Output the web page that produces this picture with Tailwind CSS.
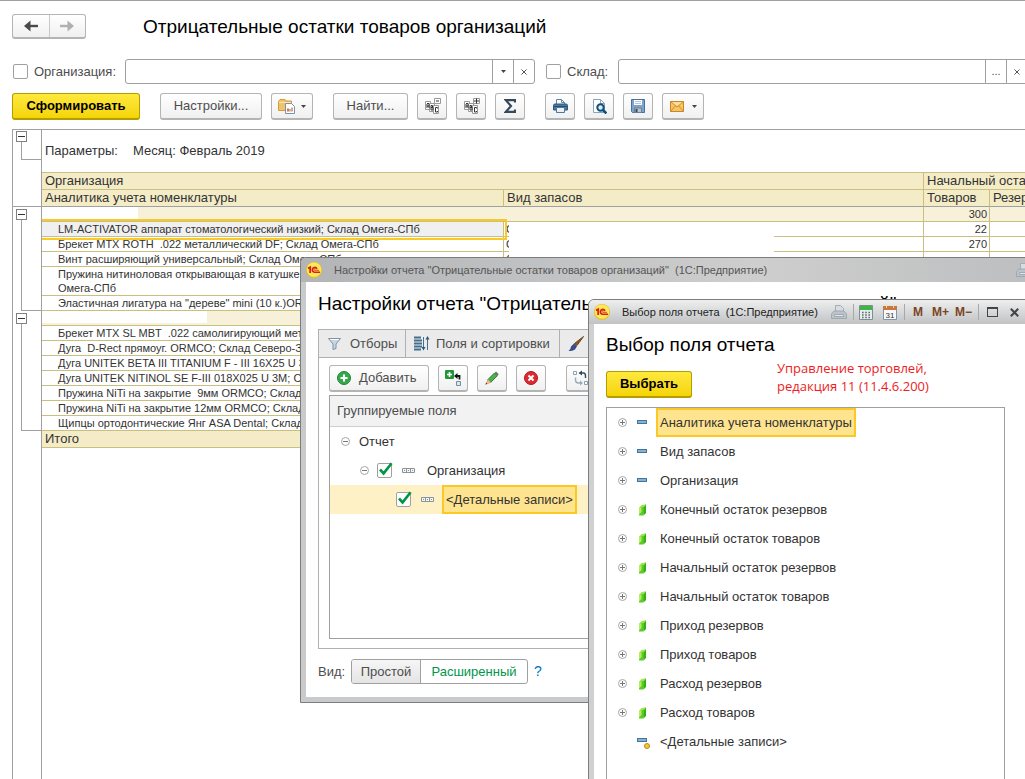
<!DOCTYPE html>
<html lang="ru">
<head>
    <meta charset="UTF-8">
    <meta name="viewport" content="width=device-width, initial-scale=1.0">
    <title>Отрицательные остатки товаров организаций</title>
    <script src="https://cdn.jsdelivr.net/npm/@tailwindcss/browser@4"></script>
</head>
<body class="relative flex h-screen flex-col overflow-hidden border-t border-[#a0a0a0] bg-white pl-3 font-['Liberation_Sans',Arial,sans-serif] text-[13px] text-[#4d4d4d]">

    <!-- Shared icons -->
    <svg class="hidden">
        <symbol id="logo" viewBox="0 0 16 16">
            <circle cx="8" cy="8" r="8" fill="#e3c32e"/>
            <circle cx="8" cy="7.6" r="7.2" fill="#ffe95a"/>
            <path d="M2 6.4 4.200 5.200V11" fill="none" stroke="#d8201a" stroke-width="1.800"/>
            <path d="M11 6.800A2.400 2.400 0 1 0 8.700 10.200H14" fill="none" stroke="#d8201a" stroke-width="1.600"/>
            <path d="M9.800 7.200a.9.9 0 1 0-1 1.100H13" fill="none" stroke="#d8201a" stroke-width=".8"/>
        </symbol>
        <symbol id="plus" viewBox="0 0 9 9">
            <circle cx="4.5" cy="4.5" r="4" fill="#fff" stroke="#a6a6a6"/>
            <path d="M2 4.5h5M4.5 2v5" stroke="#777"/>
        </symbol>
        <symbol id="minus" viewBox="0 0 9 9">
            <circle cx="4.5" cy="4.5" r="4" fill="#fff" stroke="#a6a6a6"/>
            <path d="M2 4.5h5" stroke="#777"/>
        </symbol>
        <symbol id="dim" viewBox="0 0 14 14">
            <rect x="0.5" y="4.5" width="9" height="3" fill="#7fb4dc" stroke="#4a7291"/>
        </symbol>
        <symbol id="measure" viewBox="0 0 14 14">
            <path d="M5 2.500 9 1.500V10L6.500 12.500z" fill="#36b012"/>
            <path d="M2 5 4.500 2 9 1.500 7 4z" fill="#9be650"/>
            <path d="M2 5 4 4h3L6.500 12.500H2z" fill="#58cc28"/>
            <path d="M2 5 4.500 4v5L2 11.500z" fill="#b8ec58"/>
        </symbol>
        <symbol id="tick" viewBox="0 0 17 17">
            <path d="M3 8.5 6.6 12.4 14.6 2.2" fill="none" stroke="#009646" stroke-width="2.6"/>
        </symbol>
        <symbol id="group" viewBox="0 0 13 5">
            <path d="M.5.5h12v4H.5zM4.5.5v4M8.5.5v4M2 2.5h1M6 2.5h1M10 2.5h1" fill="#f4f5f6" stroke="#8b949b"/>
        </symbol>
        <symbol id="printer-off" viewBox="0 0 16 14">
            <path d="M4.5 6V.5h5l3 3V6" fill="#d9dde0" stroke="#a4adb5"/>
            <path d="M3 6h10l2.5 3v4.5H.5V9z" fill="#bcc3c9" stroke="#a0a9b1"/>
            <path d="M3.5 9.5h9v2h-9z" fill="#e4e7e9" stroke="#a0a9b1"/>
        </symbol>
        <symbol id="down" viewBox="0 0 5 3"><path d="M0 0h5L2.5 3z" fill="#444"/></symbol>
        <symbol id="cross" viewBox="0 0 6 6"><path d="M.5.5l5 5M5.5.5l-5 5" stroke="#555"/></symbol>
    </svg>

    <!-- Header -->
    <header class="flex items-center gap-[57px] pt-3">
        <div class="flex h-[25px] w-[74px] rounded-[3px] border border-b-2 border-[#b4b4b4] bg-linear-to-b from-white to-[#f0f0f0]">
            <button type="button" aria-label="Назад" class="flex flex-1 items-center justify-center border-r border-[#c8c8c8]">
                <svg class="h-3 w-[14px]" viewBox="0 0 14 12"><path d="M3 6h11" stroke="#4a4a4a" stroke-width="2.4"/><path d="M6.5.5V11.500L0 6z" fill="#4a4a4a"/></svg>
            </button>
            <button type="button" aria-label="Вперед" class="flex flex-1 items-center justify-center">
                <svg class="h-3 w-[14px]" viewBox="0 0 14 12"><path d="M0 6h11" stroke="#b0b0b0" stroke-width="2.400"/><path d="M7.500.5V11.500L14 6z" fill="#b0b0b0"/></svg>
            </button>
        </div>
        <h1 class="text-[19px] leading-[27px] text-black">Отрицательные остатки товаров организаций</h1>
    </header>

    <!-- Filters -->
    <div class="-mr-[3px] mt-[19px] flex items-center">
        <input type="checkbox" id="useOrg" class="ml-px size-[15px] shrink-0 appearance-none rounded-[2px] border border-[#a0a0a0]">
        <label for="useOrg" class="ml-[6px] w-[91px] shrink-0">Организация:</label>
        <div class="flex h-[25px] min-w-0 flex-1 rounded-[3px] border border-[#a0a0a0]">
            <input type="text" aria-label="Организация" class="min-w-0 flex-1 px-2 outline-none">
            <button type="button" aria-label="Выбрать из списка" class="flex w-[21px] items-center justify-center border-l border-[#a0a0a0]"><svg class="h-[3px] w-[5px]"><use href="#down"/></svg></button>
            <button type="button" aria-label="Очистить" class="flex w-[21px] items-center justify-center border-l border-[#a0a0a0]"><svg class="size-[6px]"><use href="#cross"/></svg></button>
        </div>
        <input type="checkbox" id="useStore" class="ml-[11px] size-[15px] shrink-0 appearance-none rounded-[2px] border border-[#a0a0a0]">
        <label for="useStore" class="ml-[6px] w-[51px] shrink-0">Склад:</label>
        <div class="flex h-[25px] min-w-0 flex-1 rounded-[3px] border border-[#a0a0a0]">
            <input type="text" aria-label="Склад" class="min-w-0 flex-1 px-2 outline-none">
            <button type="button" aria-label="Выбрать" class="w-[21px] border-l border-[#a0a0a0] text-[11px]">...</button>
            <button type="button" aria-label="Очистить" class="flex w-[21px] items-center justify-center border-l border-[#a0a0a0]"><svg class="size-[6px]"><use href="#cross"/></svg></button>
        </div>
    </div>

    <!-- Toolbar -->
    <div class="mt-[9px] flex gap-[9px]">
        <button type="button" class="mr-[11px] h-[27px] w-32 rounded-[3px] border border-b-2 border-[#b39d00] bg-linear-to-b from-[#ffe93b] to-[#f5d400] font-bold text-black">Сформировать</button>
        <button type="button" class="h-[27px] w-[102px] rounded-[3px] border border-b-2 border-[#b4b4b4] bg-linear-to-b from-white to-[#f0f0f0]">Настройки...</button>
        <button type="button" aria-label="Варианты отчета" class="mr-[11px] flex h-[27px] w-[42px] items-center justify-center gap-[6px] rounded-[3px] border border-b-2 border-[#b4b4b4] bg-linear-to-b from-white to-[#f0f0f0]">
            <svg class="h-4 w-[17px]" viewBox="0 0 17 16">
                <path d="M.5 12.500V3.500L2 1.500h5l1 1.500h5.500v9.500z" fill="#f0c36c" stroke="#d29a3a"/>
                <path d="M1 4.500h12" stroke="#fde6b0"/>
                <path d="M7.500 5.500h6l3 3v7h-9z" fill="#fff" stroke="#7b93a8"/>
                <path d="M10 13.500v-3" stroke="#d33" stroke-width="1.500"/><path d="M12 13.500V11" stroke="#3a9a3a"/><path d="M14 13.500V9.500" stroke="#d33"/>
            </svg>
            <svg class="h-[3px] w-[5px]"><use href="#down"/></svg>
        </button>
        <button type="button" class="h-[27px] w-[75px] rounded-[3px] border border-b-2 border-[#b4b4b4] bg-linear-to-b from-white to-[#f0f0f0]">Найти...</button>
        <button type="button" aria-label="Свернуть группы" class="flex h-[27px] w-[30px] items-center justify-center rounded-[3px] border border-b-2 border-[#b4b4b4] bg-linear-to-b from-white to-[#f0f0f0]">
            <svg class="h-4 w-[17px]" viewBox="0 0 17 16">
                <path d="M1.500 3.500h5v8h-5z" fill="#fff" stroke="#999"/><path d="M5.500 5.500h5v8h-5z" fill="#fff" stroke="#999"/><path d="M9.500 7.500h5v8h-5zM10.500.5h6v5h-6z" fill="#fff" stroke="#999"/>
                <path d="M3 10V6l1-1 1 1v4M3 8h2M7 12V7.500h1.500v2H7h2V12zM13.500 10.500v-1h-2v4.500h2v-1M12 3h3" fill="none" stroke="#333"/>
            </svg>
        </button>
        <button type="button" aria-label="Развернуть группы" class="flex h-[27px] w-[30px] items-center justify-center rounded-[3px] border border-b-2 border-[#b4b4b4] bg-linear-to-b from-white to-[#f0f0f0]">
            <svg class="h-4 w-[17px]" viewBox="0 0 17 16">
                <path d="M1.500 3.500h5v8h-5z" fill="#fff" stroke="#999"/><path d="M5.500 5.500h5v8h-5z" fill="#fff" stroke="#999"/><path d="M9.500 7.500h5v8h-5zM10.500.5h6v5h-6z" fill="#fff" stroke="#999"/>
                <path d="M3 10V6l1-1 1 1v4M3 8h2M7 12V7.500h1.500v2H7h2V12zM13.500 10.500v-1h-2v4.500h2v-1M11 3h5M13.500.5v5" fill="none" stroke="#333"/>
            </svg>
        </button>
        <button type="button" aria-label="Сумма" class="mr-[11px] flex h-[27px] w-[30px] items-center justify-center rounded-[3px] border border-b-2 border-[#b4b4b4] bg-linear-to-b from-white to-[#f0f0f0]">
            <svg class="h-[14px] w-3" viewBox="0 0 12 14"><path d="M11 3.500V1.200H1.800L7 7l-5.200 5.800H11v-2.300" fill="none" stroke="#34495a" stroke-width="2.200"/></svg>
        </button>
        <button type="button" aria-label="Печать" class="flex h-[27px] w-[30px] items-center justify-center rounded-[3px] border border-b-2 border-[#b4b4b4] bg-linear-to-b from-white to-[#f0f0f0]">
            <svg class="h-[14px] w-[15px]" viewBox="0 0 15 14">
                <path d="M3.500 6V.5h5l3 3V6" fill="#fff" stroke="#5f86a8"/><path d="M8.500.5v3h3" fill="none" stroke="#5f86a8"/>
                <path d="M.5 6.500Q.5 5 2 5h11q1.500 0 1.500 1.500V11H.5z" fill="#4c789d" stroke="#2f587c"/><path d="M1 7.500h13" stroke="#274d70"/>
                <path d="M3.500 8.500h8v5h-8z" fill="#e9f0f6" stroke="#4c789d"/>
            </svg>
        </button>
        <button type="button" aria-label="Просмотр" class="flex h-[27px] w-[30px] items-center justify-center rounded-[3px] border border-b-2 border-[#b4b4b4] bg-linear-to-b from-white to-[#f0f0f0]">
            <svg class="h-[15px] w-[15px]" viewBox="0 0 15 15">
                <path d="M1.500 13.500V.5h7l4 4v9z" fill="#fff" stroke="#8ea4b6"/><path d="M8.500.5v4h4" fill="none" stroke="#8ea4b6"/>
                <circle cx="8.500" cy="8.500" r="3.200" fill="#dcebf5" stroke="#0f4f7d" stroke-width="2"/><path d="M11 11l3.400 3.400" stroke="#0f4f7d" stroke-width="2.600"/>
            </svg>
        </button>
        <button type="button" aria-label="Сохранить" class="flex h-[27px] w-[30px] items-center justify-center rounded-[3px] border border-b-2 border-[#b4b4b4] bg-linear-to-b from-white to-[#f0f0f0]">
            <svg class="size-[14px]" viewBox="0 0 14 14">
                <path d="M.5.5h13v13h-12l-1-1z" fill="#7ba3d0" stroke="#496f9f"/>
                <path d="M3 1h8v5H3z" fill="#fff"/><path d="M4 2.500h6M4 4.500h6" stroke="#b4c4d4"/>
                <path d="M3.500 9h7v4.500h-7z" fill="#b9c4cd" stroke="#6d7f90"/><path d="M5.500 10v3" stroke="#33475b" stroke-width="2"/>
            </svg>
        </button>
        <button type="button" aria-label="Отправить" class="flex h-[27px] w-[42px] items-center justify-center gap-2 rounded-[3px] border border-b-2 border-[#b4b4b4] bg-linear-to-b from-white to-[#f0f0f0]">
            <svg class="h-[11px] w-[14px]" viewBox="0 0 14 11"><path d="M.5.5h13v10H.5z" fill="#f7c566" stroke="#c8882a"/><path d="M.5.5 7 6l6.500-5.500M.5 10.500 5.200 5M13.500 10.500 8.800 5" fill="none" stroke="#cf8f30"/><path d="M2 1.300h10L7 5z" fill="#fde0a0"/></svg>
            <svg class="h-[3px] w-[5px]"><use href="#down"/></svg>
        </button>
    </div>

    <!-- Report -->
    <main class="mt-[9px] flex min-h-0 flex-1 flex-col overflow-hidden border-t border-l border-[#a0a0a0] text-[#333]">
        <table class="w-[1100px] min-w-full table-fixed border-separate border-spacing-0 text-left text-[11px] leading-[14px] [&_td]:p-0 [&_th]:p-0 [&_th]:font-normal">
            <colgroup>
                <col class="w-[29px]"><col class="w-[462px]"><col class="w-[420px]"><col class="w-[66px]"><col>
            </colgroup>
            <thead class="text-[13px] leading-4">
                <tr>
                    <td rowspan="3" class="border-r border-b border-[#a0a0a0] align-top">
                        <div class="flex h-[30px] flex-col pt-px pl-[3px]">
                            <button type="button" aria-label="Свернуть" class="flex size-[11px] items-center justify-center border border-[#808080]"><span class="h-px w-[7px] bg-[#333]"></span></button>
                            <span class="ml-[5px] flex-1 border-b border-l border-[#a0a0a0]"></span>
                        </div>
                    </td>
                    <td colspan="4" class="h-[43px] border-b border-[#c9bf80]"><span class="inline-block w-[91px] pl-[3px]">Параметры:</span>Месяц: Февраль 2019</td>
                </tr>
                <tr class="bg-[#f3ecc7]">
                    <th colspan="2" class="h-[17px] border-r border-b border-[#c9bf80]"><span class="pl-[3px]">Организация</span></th>
                    <th colspan="2" class="border-b border-[#c9bf80] whitespace-nowrap"><span class="pl-[3px]">Начальный остаток</span></th>
                </tr>
                <tr class="bg-[#f3ecc7]">
                    <th class="h-[17px] border-r border-b border-r-[#c9bf80] border-b-[#a0a0a0]"><span class="pl-[3px]">Аналитика учета номенклатуры</span></th>
                    <th class="border-r border-b border-r-[#c9bf80] border-b-[#a0a0a0]"><span class="pl-[3px]">Вид запасов</span></th>
                    <th class="border-r border-b border-r-[#c9bf80] border-b-[#a0a0a0]"><span class="pl-[3px]">Товаров</span></th>
                    <th class="border-b border-[#a0a0a0]"><span class="pl-[3px]">Резервов</span></th>
                </tr>
            </thead>
            <tbody class="[&_td]:border-[#c9bf80]">
                <tr class="bg-[#f8f1da]">
                    <td rowspan="6" class="h-px border-r border-[#a0a0a0]! bg-white align-top">
                        <div class="flex h-[104px] flex-col pt-[2px] pl-[3px]">
                            <button type="button" aria-label="Свернуть" class="flex size-[11px] items-center justify-center border border-[#808080]"><span class="h-px w-[7px] bg-[#333]"></span></button>
                            <span class="ml-[5px] flex-1 border-b border-l border-[#a0a0a0]"></span>
                        </div>
                    </td>
                    <td colspan="2" class="h-[15px] border-r border-b"><div class="h-[14px] w-24 bg-white"></div></td>
                    <td class="border-r border-b pr-[2px]! text-right">300</td>
                    <td class="border-b"></td>
                </tr>
                <tr>
                    <td class="relative h-[15px] border-r border-b bg-[#f0f0f0] pl-4!">LM-ACTIVATOR аппарат стоматологический низкий; Склад Омега-СПб
                        <span class="absolute -top-[3px] -right-1 -bottom-1 left-0 border-2 border-l-0 border-[#fbc926]"></span></td>
                    <td class="border-r border-b"><div class="flex h-[14px] overflow-hidden"><span class="w-[5px] overflow-hidden pl-[2px]">О</span><span class="-mb-px w-[265px] bg-white"></span></div></td>
                    <td class="border-r border-b pr-[2px]! text-right">22</td>
                    <td class="border-b"></td>
                </tr>
                <tr>
                    <td class="h-[15px] border-r border-b pl-4! whitespace-pre">Брекет MTX ROTH  .022 металлический DF; Склад Омега-СПб</td>
                    <td class="border-r border-b"><div class="relative z-10 -mt-px -mb-px flex h-4"><span class="w-[5px] overflow-hidden pt-px pl-[2px]">О</span><span class="w-[265px] bg-white"></span></div></td>
                    <td class="border-r border-b pr-[2px]! text-right">270</td>
                    <td class="border-b"></td>
                </tr>
                <tr>
                    <td class="h-[15px] border-r border-b pl-4!">Винт расширяющий универсальный; Склад Омега-СПб</td>
                    <td class="border-r border-b"><div class="flex h-[14px]"><span class="w-[5px] overflow-hidden pl-[2px]">1</span><span class="w-[265px] bg-white"></span></div></td>
                    <td class="border-r border-b"></td>
                    <td class="border-b"></td>
                </tr>
                <tr>
                    <td class="h-[29px] border-r border-b pl-4!">Пружина нитиноловая открывающая в катушке<br>Омега-СПб</td>
                    <td class="border-r border-b"></td>
                    <td class="border-r border-b"></td>
                    <td class="border-b"></td>
                </tr>
                <tr>
                    <td class="h-[15px] border-r border-b pl-4!">Эластичная лигатура на "дереве" mini (10 к.)ORMCO; Склад Омега-СПб</td>
                    <td class="border-r border-b"></td>
                    <td class="border-r border-b"></td>
                    <td class="border-b"></td>
                </tr>
                <tr class="bg-[#f8f1da]">
                    <td rowspan="8" class="border-r border-[#a0a0a0]! bg-white align-top">
                        <div class="flex h-[120px] flex-col pt-[2px] pl-[3px]">
                            <button type="button" aria-label="Свернуть" class="flex size-[11px] items-center justify-center border border-[#808080]"><span class="h-px w-[7px] bg-[#333]"></span></button>
                            <span class="ml-[5px] flex-1 border-b border-l border-[#a0a0a0]"></span>
                        </div>
                    </td>
                    <td colspan="2" class="h-[15px] border-r border-b align-top"><div class="h-3 w-[165px] bg-white"></div></td>
                    <td class="border-r border-b"></td>
                    <td class="border-b"></td>
                </tr>
                <tr>
                    <td colspan="4" class="h-[15px] border-b pl-4! whitespace-pre">Брекет MTX SL MBT  .022 самолигирующий металлический</td>
                </tr>
                <tr>
                    <td colspan="4" class="h-[15px] border-b pl-4! whitespace-pre">Дуга  D-Rect прямоуг. ORMCO; Склад Северо-Запад</td>
                </tr>
                <tr>
                    <td colspan="4" class="h-[15px] border-b pl-4!">Дуга UNITEK BETA III TITANIUM F - III 16X25 U 3M; Склад</td>
                </tr>
                <tr>
                    <td colspan="4" class="h-[15px] border-b pl-4!">Дуга UNITEK NITINOL SE F-III 018X025 U 3M; Склад</td>
                </tr>
                <tr>
                    <td colspan="4" class="h-[15px] border-b pl-4! whitespace-pre">Пружина NiTi на закрытие  9мм ORMCO; Склад Омега-СПб</td>
                </tr>
                <tr>
                    <td colspan="4" class="h-[15px] border-b pl-4!">Пружина NiTi на закрытие 12мм ORMCO; Склад Омега-СПб</td>
                </tr>
                <tr>
                    <td colspan="4" class="h-[15px] border-b pl-4!">Щипцы ортодонтические Янг ASA Dental; Склад Омега-СПб</td>
                </tr>
            </tbody>
            <tfoot class="text-[13px] leading-4">
                <tr>
                    <td class="border-r border-[#a0a0a0]"></td>
                    <td colspan="4" class="h-[17px] border-b border-[#c9bf80] bg-[#f3ecc7] pl-[3px]!">Итого</td>
                </tr>
            </tfoot>
        </table>
        <div class="ml-7 flex-1 border-l border-[#a0a0a0]"></div>
    </main>

    <!-- Report settings window -->
    <section class="absolute top-[256px] left-[300px] -right-[191px] z-20 flex h-[446px] flex-col rounded-t-[6px] border border-[#7d7d7d] bg-[#c9cacb]">
        <div class="flex h-6 items-center rounded-t-[5px] bg-linear-to-r from-[#b2b4b6] via-[#cecece] to-[#b2b4b6] pr-3 pl-[5px] text-[11px]">
            <svg class="size-4"><use href="#logo"/></svg>
            <h2 class="ml-3 flex-1 whitespace-pre text-[#555]">Настройки отчета "Отрицательные остатки товаров организаций"  (1С:Предприятие)</h2>
            <svg class="mr-[171px] h-[14px] w-4"><use href="#printer-off"/></svg>
        </div>
        <div class="mx-[5px] mb-[5px] flex flex-1 flex-col bg-white px-3">
            <h3 class="mt-2 text-[19px] leading-7 text-black">Настройки отчета "Отрицательные остатки товаров организаций"</h3>
            <div class="mt-[11px] flex h-[320px] flex-col border border-[#b0b0b0]">
                <div class="flex h-7 shrink-0 border-b border-[#b0b0b0] bg-[#ebebeb]" role="tablist">
                    <button type="button" role="tab" class="flex w-[87px] items-center gap-[9px] border-r border-[#b0b0b0] pl-[9px]">
                        <svg class="size-[13px]" viewBox="0 0 13 13"><path d="M.5 1.500h12L8 7v4.500l-3 1V7z" fill="#c9d6df" stroke="#7d93a5"/><path d="M2 2.500h9" stroke="#fff"/></svg>
                        Отборы</button>
                    <button type="button" role="tab" class="flex w-[154px] items-center gap-[6px] border-r border-[#b0b0b0] pl-2">
                        <svg class="h-[15px] w-4" viewBox="0 0 16 15"><path d="M0 1.500h7M0 4.500h8M0 7.500h8M0 10.500h8M0 13.500h7" stroke="#44708f" stroke-width="1.800"/><path d="M9.500 1v10M13.500 3v11" stroke="#44708f"/><path d="M7.500 11h4l-2 3.500zM11.500 3.500h4L13.500 0z" fill="#2a5878"/></svg>
                        Поля и сортировки</button>
                    <button type="button" role="tab" class="flex items-center gap-2 pl-2">
                        <svg class="size-4" viewBox="0 0 16 16"><path d="M15.500.5 9 9.500 6.500 7.500z" fill="#8a5a2a" stroke="#6b431c"/><path d="M6 7.500l3 2.700L7 13.500Q3.500 15.500.5 15 3 13 3 10.500z" fill="#3c4a86"/></svg>
                        Оформление</button>
                </div>
                <div class="flex gap-[9px] px-[10px] pt-[7px]">
                    <button type="button" class="flex h-[27px] w-[100px] items-center gap-2 rounded-[3px] border border-b-2 border-[#b4b4b4] bg-linear-to-b from-white to-[#f0f0f0] pl-[7px]">
                        <svg class="size-[14px]" viewBox="0 0 14 14"><circle cx="7" cy="7" r="6.500" fill="#35a84c" stroke="#1e8236"/><path d="M3.500 7h7M7 3.500v7" stroke="#fff" stroke-width="2"/></svg>
                        Добавить</button>
                    <button type="button" aria-label="Добавить подчиненную" class="flex h-[27px] w-[30px] items-center justify-center rounded-[3px] border border-b-2 border-[#b4b4b4] bg-linear-to-b from-white to-[#f0f0f0]">
                        <svg class="size-4" viewBox="0 0 16 16"><rect width="9" height="9" rx="1" fill="#1f9637"/><path d="M2 4.500h5M4.500 2v5" stroke="#fff" stroke-width="1.600"/><path d="M14.500 9.500V6H12" fill="none" stroke="#111" stroke-width="1.800"/><path d="M9 6l3.500-3v6z" fill="#111"/><path d="M11.500 11.500h4v4h-4z" fill="#dce6ee" stroke="#6f8da6"/></svg>
                    </button>
                    <button type="button" aria-label="Изменить" class="flex h-[27px] w-[30px] items-center justify-center rounded-[3px] border border-b-2 border-[#b4b4b4] bg-linear-to-b from-white to-[#f0f0f0]">
                        <svg class="size-[14px]" viewBox="0 0 14 14"><path d="M3 8.500 9.500 2l2.800 2.800L5.800 11.300z" fill="#4fae4f" stroke="#2c7a34"/><path d="M9.500 2 11 .6l2.700 2.700-1.400 1.500z" fill="#5b7d52"/><path d="M3 8.500 5.800 11.300 .8 13.300z" fill="#f3c586" stroke="#bb8a4c" stroke-width=".6"/><path d="M.5 13.500l1.600-.7-1-1z" fill="#333"/></svg>
                    </button>
                    <button type="button" aria-label="Удалить" class="mr-[11px] flex h-[27px] w-[30px] items-center justify-center rounded-[3px] border border-b-2 border-[#b4b4b4] bg-linear-to-b from-white to-[#f0f0f0]">
                        <svg class="size-[14px]" viewBox="0 0 14 14"><circle cx="7" cy="7" r="6.500" fill="#dc2a32" stroke="#b01820"/><path d="M4.500 4.500l5 5M9.500 4.500l-5 5" stroke="#fff" stroke-width="2"/></svg>
                    </button>
                    <button type="button" aria-label="Сгруппировать" class="flex h-[27px] w-[30px] items-center rounded-[3px] border border-b-2 border-[#b4b4b4] bg-linear-to-b from-white to-[#f0f0f0] pl-[6px]">
                        <svg class="size-4" viewBox="0 0 16 16"><path d="M.5 1.500h3v3h-3zM11.500 11.500h3v3h-3z" fill="#fff" stroke="#8aa0b2"/><path d="M8 3h2.500q2 0 2 3v2" fill="none" stroke="#334a5c" stroke-width="1.400"/><path d="M2.500 7.500V10q0 3 3 3H8" fill="none" stroke="#9aaab7" stroke-width="1.400"/><path d="M5.500 3 9 .5v5z" fill="#334a5c"/><path d="M10 13 7 10.500v5z" fill="#9aaab7"/></svg>
                    </button>
                </div>
                <div class="mx-[10px] mt-[3px] mb-[9px] flex-1 border border-[#a0a0a0]">
                    <div class="h-[31px] border-b border-[#cfcfcf] bg-[#f2f2f2] pl-[7px] leading-[30px]">Группируемые поля</div>
                    <ul class="text-[#333]">
                        <li class="flex h-[29px] items-center pl-[11px]">
                            <button type="button" aria-label="Свернуть"><svg class="size-[9px]"><use href="#minus"/></svg></button>
                            <span class="ml-[9px]">Отчет</span>
                        </li>
                        <li class="flex h-[29px] items-center pl-[30px]">
                            <button type="button" aria-label="Свернуть"><svg class="size-[9px]"><use href="#minus"/></svg></button>
                            <span class="relative ml-2 flex">
                                <input type="checkbox" id="grpOrg" checked class="size-[15px] appearance-none rounded-[2px] border border-[#a0a0a0] bg-white">
                                <svg class="pointer-events-none absolute -top-[2px] left-0 size-[17px]"><use href="#tick"/></svg>
                            </span>
                            <svg class="ml-[10px] h-[5px] w-[13px]"><use href="#group"/></svg>
                            <label for="grpOrg" class="ml-3">Организация</label>
                        </li>
                        <li class="flex h-[29px] items-center bg-[#fff1c6] pl-[66px]">
                            <span class="relative flex">
                                <input type="checkbox" id="grpDetail" checked class="size-[15px] appearance-none rounded-[2px] border border-[#a0a0a0] bg-white">
                                <svg class="pointer-events-none absolute -top-[2px] left-0 size-[17px]"><use href="#tick"/></svg>
                            </span>
                            <svg class="ml-[10px] h-[5px] w-[13px]"><use href="#group"/></svg>
                            <label for="grpDetail" class="ml-2 h-[29px] border-2 border-[#fbc926] bg-[#ffe48f] px-[2px] leading-[25px]">&lt;Детальные записи&gt;</label>
                        </li>
                    </ul>
                </div>
            </div>
            <div class="mt-[10px] flex items-center">
                <span class="w-[33px]">Вид:</span>
                <div class="flex h-[25px] overflow-hidden rounded-[3px] border border-[#a0a0a0]">
                    <button type="button" class="w-[69px] border-r border-[#a0a0a0] bg-linear-to-b from-[#f6f6f6] to-[#e4e4e4]">Простой</button>
                    <button type="button" class="w-[106px] text-[#00964b]">Расширенный</button>
                </div>
                <a href="#" class="ml-[6px] text-[14px] text-[#0073c4]">?</a>
            </div>
        </div>
    </section>

    <!-- Field selection window -->
    <section class="absolute top-[298px] -right-[6px] -bottom-5 left-[588px] z-30 flex flex-col rounded-t-[6px] border border-[#7d7d7d] bg-[#cfd0d1]">
        <div class="flex h-6 items-center rounded-t-[5px] bg-linear-to-b from-[#efefef] to-[#c0c2c4] pr-[11px] pl-[5px] text-[12px] text-[#222]">
            <svg class="size-4"><use href="#logo"/></svg>
            <h2 class="ml-3 flex-1 text-[11px] whitespace-pre">Выбор поля отчета  (1С:Предприятие)</h2>
            <svg class="mr-[6px] h-[14px] w-4"><use href="#printer-off"/></svg>
            <span class="mr-[5px] h-4 w-px bg-[#a8a8a8]"></span>
            <button type="button" aria-label="Калькулятор" class="mr-[10px]">
                <svg class="h-[15px] w-[14px]" viewBox="0 0 14 15"><path d="M.5.5h13v14H.5z" fill="#e8ecec" stroke="#7d9090"/><path d="M1 1h12v4H1z" fill="#3fb548"/><path d="M3 7.500h8M3 10h8M3 12.500h8" stroke="#55707c" stroke-width="1.400" stroke-dasharray="1.600"/></svg>
            </button>
            <button type="button" aria-label="Календарь" class="mr-[7px]">
                <svg class="h-[15px] w-[14px]" viewBox="0 0 14 15"><path d="M.5 1.500h13v13H.5z" fill="#f7f9fb" stroke="#7f95a8"/><path d="M0 1h14v4H0z" fill="#c9773c"/><path d="M3.500 0v3M10.500 0v3" stroke="#f1d6c0"/><text x="7" y="13" text-anchor="middle" font-size="8" fill="#333">31</text></svg>
            </button>
            <span class="mr-2 h-4 w-px bg-[#a8a8a8]"></span>
            <button type="button" class="mr-[9px] font-bold text-[#7a4524]">M</button>
            <button type="button" class="mr-[6px] font-bold text-[#7a4524]">M+</button>
            <button type="button" class="mr-[6px] font-bold text-[#7a4524]">M−</button>
            <span class="mr-2 h-4 w-px bg-[#a8a8a8]"></span>
            <button type="button" aria-label="Развернуть" class="mr-3 h-[10px] w-[11px] border border-t-2 border-[#444]"></button>
            <button type="button" aria-label="Закрыть"><svg class="size-[9px]" viewBox="0 0 9 9"><path d="M.8.8l7.400 7.400M8.200.8.8 8.200" stroke="#444" stroke-width="2"/></svg></button>
        </div>
        <div class="mx-[5px] flex min-h-0 flex-1 flex-col bg-white pr-5 pl-3">
            <h3 class="mt-[7px] text-[19px] leading-7 text-black">Выбор поля отчета</h3>
            <div class="flex items-end">
                <button type="button" class="mb-px h-[27px] w-[86px] rounded-[3px] border border-b-2 border-[#b39d00] bg-linear-to-b from-[#ffe93b] to-[#f5d400] font-bold text-black">Выбрать</button>
                <p class="mb-1 ml-[85px] font-['Open_Sans','Noto_Sans',sans-serif] text-[13px] leading-[18px] text-[#ee1c24]">Управление торговлей,<br>редакция 11 (11.4.6.200)</p>
            </div>
            <ul class="mt-2 flex-1 border border-[#a0a0a0] text-[#333]">
                <li class="flex h-[29px] items-center pl-[11px]"><button type="button" aria-label="Развернуть"><svg class="size-[9px]"><use href="#plus"/></svg></button><svg class="ml-[10px] size-[14px]"><use href="#dim"/></svg><span class="ml-[5px] h-[29px] border-2 border-[#fbc926] bg-[#ffe48f] px-[2px] leading-[25px]">Аналитика учета номенклатуры</span></li>
                <li class="flex h-[29px] items-center pl-[11px]"><button type="button" aria-label="Развернуть"><svg class="size-[9px]"><use href="#plus"/></svg></button><svg class="ml-[10px] size-[14px]"><use href="#dim"/></svg><span class="ml-[9px]">Вид запасов</span></li>
                <li class="flex h-[29px] items-center pl-[11px]"><button type="button" aria-label="Развернуть"><svg class="size-[9px]"><use href="#plus"/></svg></button><svg class="ml-[10px] size-[14px]"><use href="#dim"/></svg><span class="ml-[9px]">Организация</span></li>
                <li class="flex h-[29px] items-center pl-[11px]"><button type="button" aria-label="Развернуть"><svg class="size-[9px]"><use href="#plus"/></svg></button><svg class="ml-[10px] size-[14px]"><use href="#measure"/></svg><span class="ml-[9px]">Конечный остаток резервов</span></li>
                <li class="flex h-[29px] items-center pl-[11px]"><button type="button" aria-label="Развернуть"><svg class="size-[9px]"><use href="#plus"/></svg></button><svg class="ml-[10px] size-[14px]"><use href="#measure"/></svg><span class="ml-[9px]">Конечный остаток товаров</span></li>
                <li class="flex h-[29px] items-center pl-[11px]"><button type="button" aria-label="Развернуть"><svg class="size-[9px]"><use href="#plus"/></svg></button><svg class="ml-[10px] size-[14px]"><use href="#measure"/></svg><span class="ml-[9px]">Начальный остаток резервов</span></li>
                <li class="flex h-[29px] items-center pl-[11px]"><button type="button" aria-label="Развернуть"><svg class="size-[9px]"><use href="#plus"/></svg></button><svg class="ml-[10px] size-[14px]"><use href="#measure"/></svg><span class="ml-[9px]">Начальный остаток товаров</span></li>
                <li class="flex h-[29px] items-center pl-[11px]"><button type="button" aria-label="Развернуть"><svg class="size-[9px]"><use href="#plus"/></svg></button><svg class="ml-[10px] size-[14px]"><use href="#measure"/></svg><span class="ml-[9px]">Приход резервов</span></li>
                <li class="flex h-[29px] items-center pl-[11px]"><button type="button" aria-label="Развернуть"><svg class="size-[9px]"><use href="#plus"/></svg></button><svg class="ml-[10px] size-[14px]"><use href="#measure"/></svg><span class="ml-[9px]">Приход товаров</span></li>
                <li class="flex h-[29px] items-center pl-[11px]"><button type="button" aria-label="Развернуть"><svg class="size-[9px]"><use href="#plus"/></svg></button><svg class="ml-[10px] size-[14px]"><use href="#measure"/></svg><span class="ml-[9px]">Расход резервов</span></li>
                <li class="flex h-[29px] items-center pl-[11px]"><button type="button" aria-label="Развернуть"><svg class="size-[9px]"><use href="#plus"/></svg></button><svg class="ml-[10px] size-[14px]"><use href="#measure"/></svg><span class="ml-[9px]">Расход товаров</span></li>
                <li class="flex h-[29px] items-center pl-[30px]"><svg class="size-[14px]" viewBox="0 0 14 14"><rect x="0.5" y="3.500" width="9" height="3" fill="#7fb4dc" stroke="#4a7291"/><circle cx="10" cy="11" r="2.500" fill="#f5c836" stroke="#b38a1c"/></svg><span class="ml-[9px]">&lt;Детальные записи&gt;</span></li>
            </ul>
        </div>
    </section>
</body>
</html>
